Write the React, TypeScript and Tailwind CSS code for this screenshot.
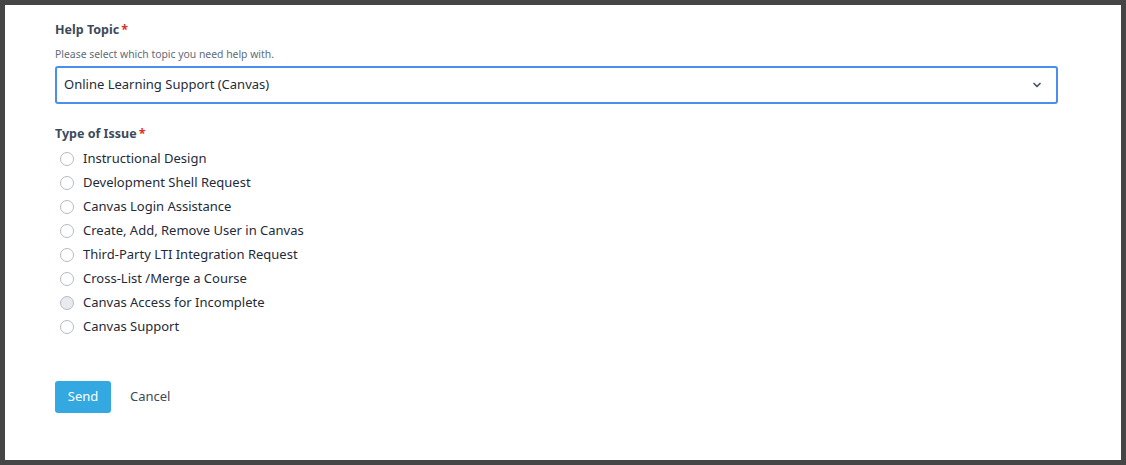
import { ChevronDown } from "lucide-react";

const issues = [
  "Instructional Design",
  "Development Shell Request",
  "Canvas Login Assistance",
  "Create, Add, Remove User in Canvas",
  "Third-Party LTI Integration Request",
  "Cross-List /Merge a Course",
  "Canvas Access for Incomplete",
  "Canvas Support",
];

export default function App() {
  return (
    <div className="w-[1126px] h-[465px] bg-[#454545] p-[5px] font-['Segoe_UI','Noto_Sans',sans-serif]">
      <div className="h-full bg-white pl-[50px] pt-[16px]">
        <div className="w-[1003px]">
          <label className="block text-[12.5px] leading-[18px] font-bold text-[#3c4a5c]">
            Help Topic<span className="ml-[2px] text-[#e0301e]">*</span>
          </label>
          <p className="mt-[8px] text-[10.4px] leading-[14px] text-[#5f6b7a]">
            Please select which topic you need help with.
          </p>
          <div className="mt-[5px] flex h-[38px] items-center justify-between rounded-[3px] border-2 border-[#4a8ff0] pl-[7px] pr-[13px]">
            <span className="text-[13px] text-[#1f2b3a]">Online Learning Support (Canvas)</span>
            <ChevronDown className="h-[12px] w-[12px] text-[#4a5568]" strokeWidth={3.5} />
          </div>

          <label className="mt-[21px] block text-[12.5px] leading-[18px] font-bold text-[#3c4a5c]">
            Type of Issue<span className="ml-[2px] text-[#e0301e]">*</span>
          </label>
          <div className="mt-[4px] flex flex-col">
            {issues.map((issue, i) => (
              <div key={issue} className="flex h-[24px] items-center">
                <span
                  className={`ml-[5px] h-[14px] w-[14px] rounded-full border border-[#b4bcc6] ${
                    i === 6 ? "bg-[#e8eaee]" : "bg-white"
                  }`}
                />
                <span className="ml-[9px] text-[13px] text-[#1f2b3a]">{issue}</span>
              </div>
            ))}
          </div>

          <div className="mt-[42px] flex items-center">
            <button className="h-[32px] w-[56px] rounded-[3px] bg-[#34a9e1] text-[13px] text-white">
              Send
            </button>
            <button className="ml-[19px] text-[13px] text-[#3c4a5c]">Cancel</button>
          </div>
        </div>
      </div>
    </div>
  );
}
